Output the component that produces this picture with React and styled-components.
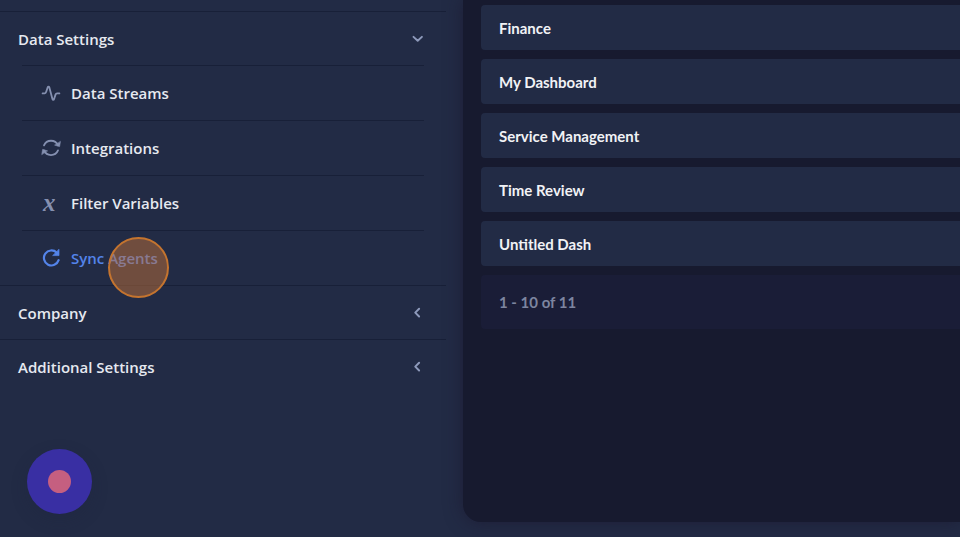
import React, { useState } from 'react';
import styled, { createGlobalStyle } from 'styled-components';

const GlobalStyle = createGlobalStyle`
  * {
    box-sizing: border-box;
  }
  body {
    margin: 0;
    background: #222b45;
    overflow: hidden;
  }
  button {
    border: 0;
    padding: 0;
    background: none;
    color: inherit;
    font: inherit;
    text-align: left;
    cursor: pointer;
  }
`;

const Page = styled.div`
  display: flex;
  min-height: 100vh;
  background: #222b45;
`;

const Sidebar = styled.aside`
  display: flex;
  flex-direction: column;
  flex: 0 0 446px;
  padding: 11px 0 23px;
  color: #e6e9f0;
  font: 600 15px/20px 'Open Sans', sans-serif;
`;

const SectionHeader = styled.button`
  display: flex;
  align-items: center;
  justify-content: space-between;
  width: 100%;
  height: 54px;
  padding: 0 22px 0 18px;
  border-top: 1px solid #182038;

  svg {
    color: #8e9abb;
  }
`;

const SubMenu = styled.ul`
  list-style: none;
  margin: 0;
  padding: 0 22px;
`;

const SubItem = styled.li`
  position: relative;
  height: 55px;
  border-top: 1px solid #182038;
`;

const SubLink = styled.a`
  display: flex;
  align-items: center;
  gap: 10px;
  height: 100%;
  padding-left: 19px;
  color: ${({ $active }) => ($active ? '#5484ea' : 'inherit')};
  text-decoration: none;

  svg {
    color: ${({ $active }) => ($active ? '#5484ea' : '#8590b0')};
  }
`;

const VariableMark = styled.span`
  width: 20px;
  padding-left: 2px;
  color: #8590b0;
  font: italic 700 25px/20px 'Liberation Serif', serif;
`;

const ClickSpot = styled.span`
  position: absolute;
  left: 86px;
  top: 6px;
  width: 61px;
  height: 61px;
  border: 2px solid #c4742f;
  border-radius: 50%;
  background: rgba(190, 111, 55, 0.5);
  pointer-events: none;
`;

const RecordButton = styled.button`
  display: flex;
  align-items: center;
  justify-content: center;
  width: 65px;
  height: 65px;
  margin: auto 0 0 27px;
  border-radius: 50%;
  background: #392fa3;
  box-shadow: 0 6px 16px rgba(30, 38, 62, 0.3);

  span {
    width: 23px;
    height: 23px;
    border-radius: 50%;
    background: #c55f80;
  }
`;

const Panel = styled.main`
  flex: 1;
  min-width: 0;
  margin: 0 0 15px 17px;
  padding: 5px 0 0 18px;
  border-bottom-left-radius: 18px;
  background: #171a2f;
  box-shadow: 0 0 18px rgba(27, 20, 44, 0.6);
  color: #f1f2f5;
  font: 700 15px/20px Lato, sans-serif;
`;

const DashboardList = styled.div`
  display: flex;
  flex-direction: column;
  gap: 9px;
`;

const DashboardRow = styled.button`
  height: 45px;
  padding: 0 18px;
  border-radius: 4px 0 0 4px;
  background: #222b45;
`;

const ListFooter = styled.div`
  display: flex;
  align-items: center;
  height: 54px;
  padding: 0 18px;
  border-radius: 4px 0 0 4px;
  background: #1a1d37;
  color: #7d85a0;
`;

const Svg = ({ size = 20, weight = 2, children }) => (
  <svg
    width={size}
    height={size}
    viewBox="0 0 20 20"
    fill="none"
    stroke="currentColor"
    strokeWidth={weight}
    strokeLinecap="round"
    strokeLinejoin="round"
    aria-hidden="true"
  >
    {children}
  </svg>
);

const PulseIcon = () => (
  <Svg weight={1.8}>
    <path d="M1.6 10.4H3.8C4.8 10.4 5 9.7 5.3 8.6L6.7 4.2C7 3.3 8 3.3 8.3 4.2L11.5 16.2C11.8 17.2 12.7 17.2 13 16.2L14.5 11.6C14.8 10.7 15.2 10.4 16.1 10.4H18.4" />
  </Svg>
);

const ArrowsIcon = () => (
  <Svg weight={1.8}>
    <path d="M3 7.4A7.6 7.6 0 0 1 17 7.4M17 12.4A7.6 7.6 0 0 1 3 12.4" />
    <path d="M19.4 3.7L18.6 8.6L13.9 7.2ZM0.8 16.3L1.6 11.4L6.3 12.8Z" fill="currentColor" strokeWidth="0.6" />
  </Svg>
);

const RefreshIcon = () => (
  <Svg weight={2.2}>
    <path d="M15.7 4.6A7.5 7.5 0 1 0 17.6 12.2" />
    <path d="M18 1.6V7.6H12Z" fill="currentColor" strokeWidth="0.7" />
  </Svg>
);

const Chevron = ({ open }) => (
  <Svg size={14} weight={2.8}>
    <path d={open ? 'M5 7L11 12.5L17 7' : 'M13 4L7.5 9.5L13 15'} />
  </Svg>
);

const dataItems = [
  { label: 'Data Streams', icon: <PulseIcon /> },
  { label: 'Integrations', icon: <ArrowsIcon /> },
  { label: 'Filter Variables', icon: <VariableMark aria-hidden="true">x</VariableMark> },
  { label: 'Sync Agents', icon: <RefreshIcon />, active: true },
];

const dashboards = ['Finance', 'My Dashboard', 'Service Management', 'Time Review', 'Untitled Dash'];

function Section({ title, items, defaultOpen = false }) {
  const [open, setOpen] = useState(defaultOpen);
  return (
    <section>
      <SectionHeader type="button" aria-expanded={open} onClick={() => setOpen(!open)}>
        {title}
        <Chevron open={open} />
      </SectionHeader>
      {open && items && (
        <SubMenu>
          {items.map(({ label, icon, active }) => (
            <SubItem key={label}>
              <SubLink href="#" $active={active}>
                {icon}
                {label}
              </SubLink>
              {active && <ClickSpot />}
            </SubItem>
          ))}
        </SubMenu>
      )}
    </section>
  );
}

function App() {
  return (
    <>
      <GlobalStyle />
      <Page>
        <Sidebar>
          <Section title="Data Settings" items={dataItems} defaultOpen />
          <Section title="Company" />
          <Section title="Additional Settings" />
          <RecordButton type="button" aria-label="Record">
            <span />
          </RecordButton>
        </Sidebar>
        <Panel>
          <DashboardList>
            {dashboards.map((name) => (
              <DashboardRow key={name} type="button">{name}</DashboardRow>
            ))}
            <ListFooter>1 - 10 of 11</ListFooter>
          </DashboardList>
        </Panel>
      </Page>
    </>
  );
}

export default App;
